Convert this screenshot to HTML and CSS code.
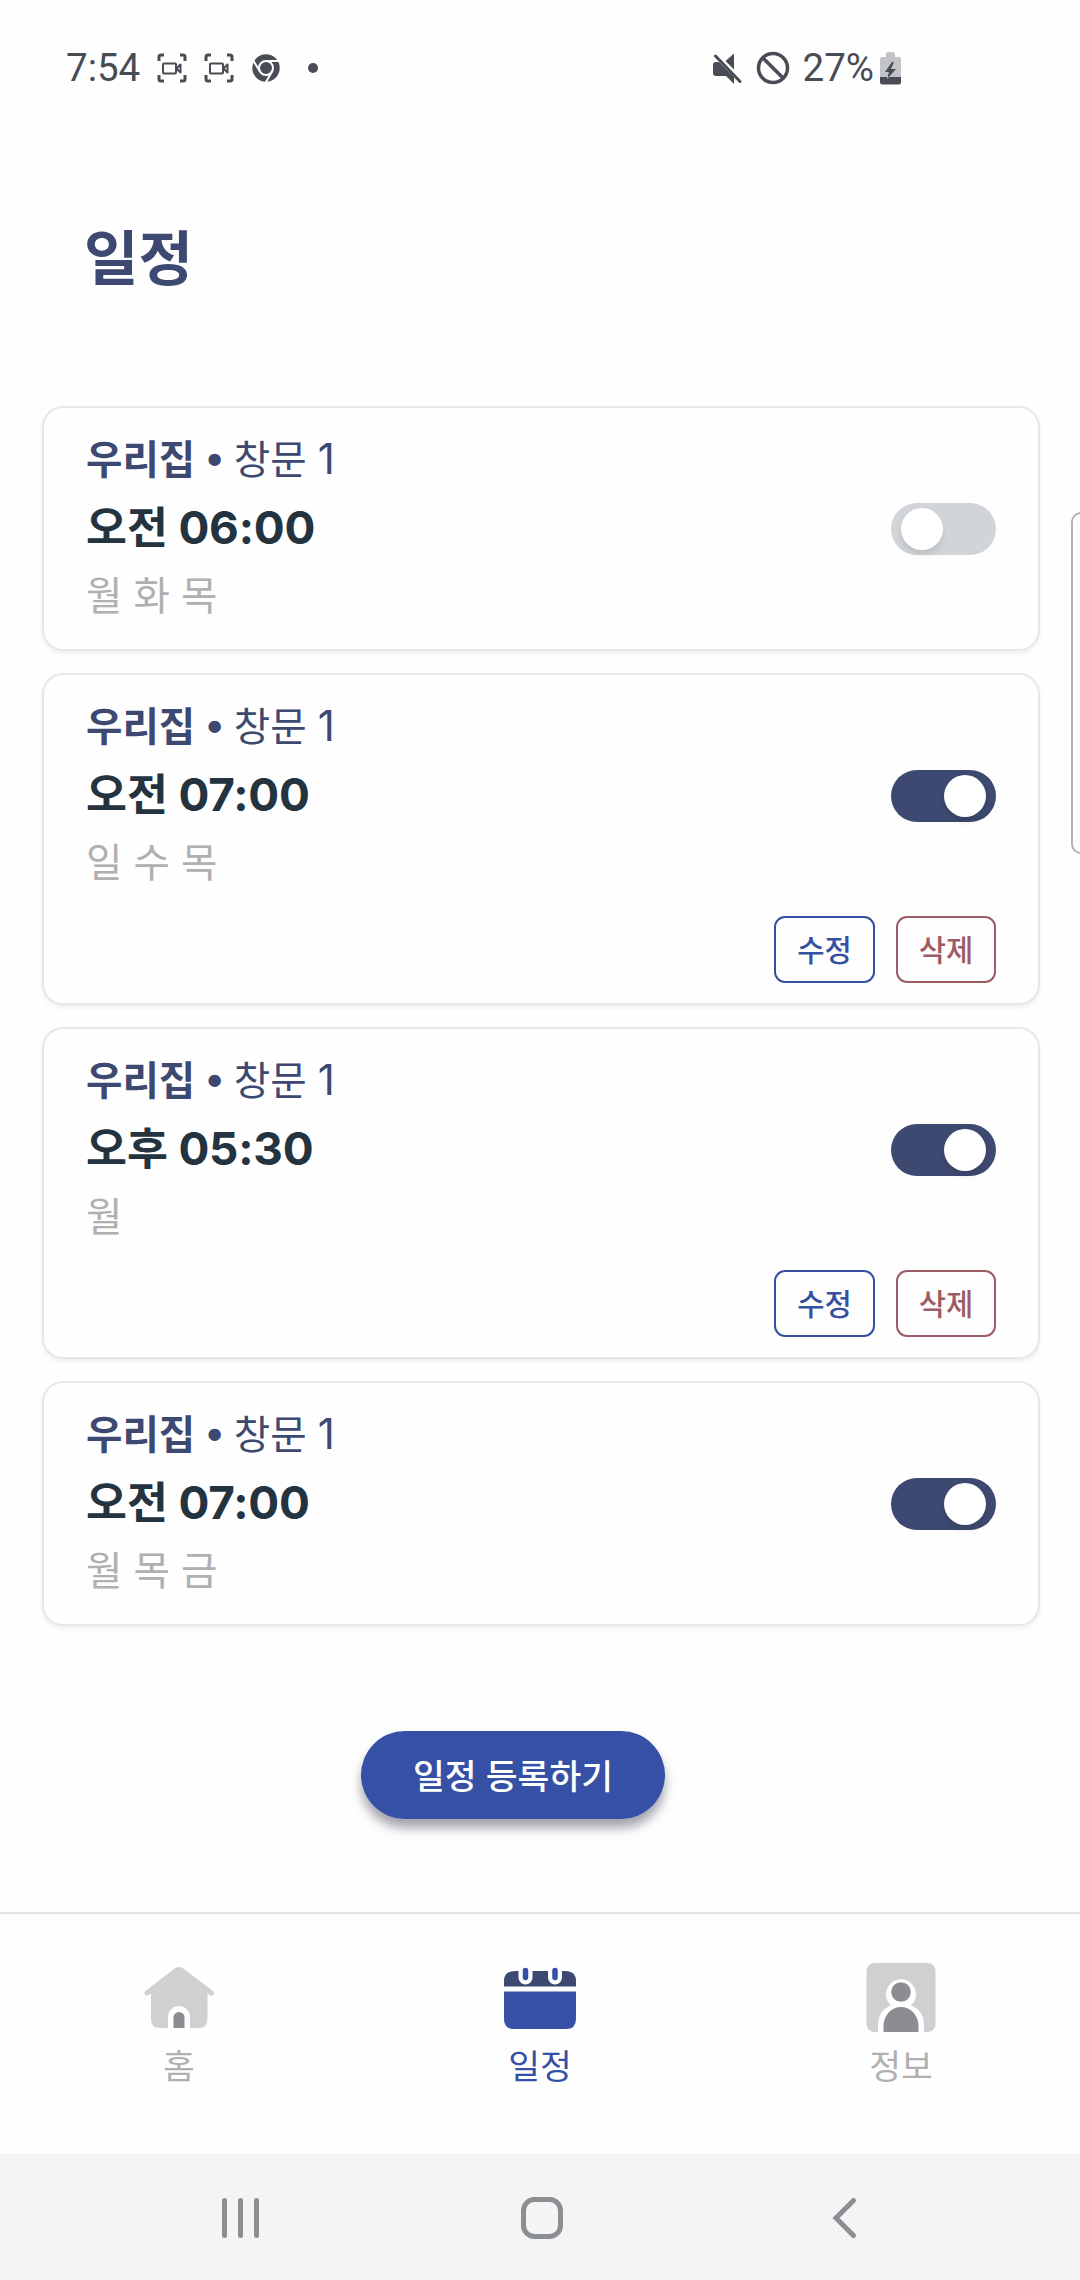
FILE: index.html
```html
<!DOCTYPE html>
<html lang="ko">
<head>
<meta charset="utf-8">
<title>일정</title>
<link rel="stylesheet" href="styles.css">
</head>
<body>
<div class="screen">
  <header class="status">
    <div class="status-left">
      <span class="clock">7:54</span>
      <svg class="cast" viewBox="0 0 30 30"><path class="line" d="M2 8V4q0-2 2-2h3M23 2h3q2 0 2 2v4M28 22v4q0 2-2 2h-3M7 28H4q-2 0-2-2v-4"/><path class="thin" d="M7 10.500h11q1 0 1 1v8q0 1-1 1H7q-1 0-1-1v-8q0-1 1-1zM19.500 15.500l4-4v8z"/></svg>
      <svg class="cast" viewBox="0 0 30 30"><path class="line" d="M2 8V4q0-2 2-2h3M23 2h3q2 0 2 2v4M28 22v4q0 2-2 2h-3M7 28H4q-2 0-2-2v-4"/><path class="thin" d="M7 10.500h11q1 0 1 1v8q0 1-1 1H7q-1 0-1-1v-8q0-1 1-1zM19.500 15.500l4-4v8z"/></svg>
      <svg class="chrome" viewBox="0 0 28 28"><circle class="fill" cx="14" cy="14" r="13.700"/><circle class="ring" cx="14" cy="14" r="7"/><path class="ring" d="M14 7h13M8 17.500L1.500 7M20 17.500L14 28"/></svg>
      <span class="dot"></span>
    </div>
    <div class="status-right">
      <svg class="mute" viewBox="0 0 30 32"><path class="fill" d="M1 13q0-3 3-3h3l15 15v7l-8-8H4q-3 0-3-3zM13.500 9L22 1.500V17.500z"/><path class="slash" d="M3.500 4l24.500 25.500"/></svg>
      <svg class="ban" viewBox="0 0 34 34"><circle cx="17" cy="17" r="14.500"/><path d="M7 7l20 20"/></svg>
      <span class="percent">27%</span>
      <svg class="battery" viewBox="0 0 22 33"><path class="shell" d="M6 5V2q0-2 2-2h5q2 0 2 2v3h4q2 0 2 2v18H0V7q0-2 2-2z"/><path class="fill" d="M0 25h21v5q0 2.500-2.500 2.500h-16Q0 32.500 0 30zM12 10l-7 10h4l-2 7 9-10h-5l3-7z"/></svg>
    </div>
  </header>

  <h1 class="title">일정</h1>

  <main class="cards">
    <article class="card">
      <div class="row">
        <div class="info">
          <p class="place"><b>우리집</b> <i>•</i> 창문 <span class="num">1</span></p>
          <p class="time">오전 <span class="num">06:00</span></p>
          <p class="days">월 화 목</p>
        </div>
        <div class="toggle"><span class="knob"></span></div>
      </div>
    </article>
    <article class="card">
      <div class="row">
        <div class="info">
          <p class="place"><b>우리집</b> <i>•</i> 창문 <span class="num">1</span></p>
          <p class="time">오전 <span class="num">07:00</span></p>
          <p class="days">일 수 목</p>
        </div>
        <div class="toggle on"><span class="knob"></span></div>
      </div>
      <div class="actions"><button class="edit">수정</button><button class="delete">삭제</button></div>
    </article>
    <article class="card">
      <div class="row">
        <div class="info">
          <p class="place"><b>우리집</b> <i>•</i> 창문 <span class="num">1</span></p>
          <p class="time">오후 <span class="num">05:30</span></p>
          <p class="days">월</p>
        </div>
        <div class="toggle on"><span class="knob"></span></div>
      </div>
      <div class="actions"><button class="edit">수정</button><button class="delete">삭제</button></div>
    </article>
    <article class="card">
      <div class="row">
        <div class="info">
          <p class="place"><b>우리집</b> <i>•</i> 창문 <span class="num">1</span></p>
          <p class="time">오전 <span class="num">07:00</span></p>
          <p class="days">월 목 금</p>
        </div>
        <div class="toggle on"><span class="knob"></span></div>
      </div>
    </article>
  </main>

  <div class="register-row"><button class="register">일정 등록하기</button></div>

  <nav class="tabs">
    <div class="tab">
      <svg viewBox="0 0 76 76"><path class="light" d="M33 9q5-4 10 0l29 22q2 2 .500 3.500-1.500 2-3.500.500l-2.500-1.500V59q0 9-9 9H49V57a11 11 0 0 0-22 0v11h-8q-9 0-9-9V33.500L7.500 35Q5 36 4 34.500 2.500 33 4.500 31z"/><path class="mid" d="M32.500 68V57.500a5.500 5.500 0 0 1 11 0V68z"/></svg>
      <span>홈</span>
    </div>
    <div class="tab active">
      <svg viewBox="0 0 76 76"><path class="navy" d="M2 26.500V21Q2 11 13 11h50q11 0 11 10v5.500z"/><path class="blue" d="M2 31.500h72V59q0 10-10 10H12Q2 69 2 59z"/><path class="gap" d="M23.500 5v12.500M53 5v12.500"/><path class="pin" d="M23.500 10.500v7M53 10.500v7"/></svg>
      <span>일정</span>
    </div>
    <div class="tab">
      <svg viewBox="0 0 76 76"><rect class="light" x="3.500" y="3" width="69" height="69" rx="8"/><path class="white" d="M15 72V66q0-16 13-20.500a15 15 0 1 1 20 0Q61 50 61 66v6z"/><circle class="mid" cx="38" cy="32" r="9.800"/><path class="mid" d="M20.500 72v-6a17.500 19 0 0 1 35 0v6z"/></svg>
      <span>정보</span>
    </div>
  </nav>

  <footer class="sysnav">
    <svg viewBox="0 0 50 50"><path d="M9.500 7.500v35M25.500 7.500v35M41.500 7.500v35"/></svg>
    <svg viewBox="0 0 50 50"><rect x="6.500" y="6.500" width="37" height="37" rx="11"/></svg>
    <svg viewBox="0 0 50 50"><path d="M33.500 7.500L16 25l17.500 17.500"/></svg>
  </footer>
  <span class="edge-handle"></span>
</div>
</body>
</html>
```
FILE: styles.css
```css
* { box-sizing: border-box; margin: 0; padding: 0; }
body {
  width: 1080px;
  height: 2280px;
  background: #fefefe;
  font-family: Inter, "Noto Sans CJK KR", sans-serif;
}
button { font: inherit; background: none; border: 0; }
svg { display: block; flex: none; }
.screen { position: relative; width: 1080px; height: 2280px; overflow: hidden; display: flex; flex-direction: column; }

.status {
  height: 136px;
  padding: 0 178px 0 66px;
  display: flex;
  justify-content: space-between;
  align-items: center;
  color: #4a4c55;
  font: 38.5px/44px Roboto, sans-serif;
}
.status-left, .status-right { display: flex; align-items: center; }
.clock { width: 91px; }
.cast { width: 30px; height: 30px; margin-right: 17px; }
.line, .thin { fill: none; stroke: #4a4c55; stroke-width: 3; }
.thin { stroke-width: 2; stroke-linejoin: round; }
.fill { fill: #4a4c55; }
.chrome { width: 28px; height: 28px; margin-left: 1px; }
.ring { fill: none; stroke: #fefefe; stroke-width: 2; }
.dot { width: 10px; height: 10px; border-radius: 50%; background: #4a4c55; margin-left: 27.5px; }
.mute { width: 30px; height: 32px; }
.slash { stroke: #4a4c55; stroke-width: 3; stroke-linecap: round; }
.ban { width: 34px; height: 34px; margin: 0 13px 0 14px; fill: none; stroke: #4a4c55; stroke-width: 3.5; }
.battery { width: 22px; height: 33px; margin-left: 6px; }
.shell { fill: #c3c4ca; }

.title { height: 270px; padding: 77px 0 0 84px; font-size: 59.3px; line-height: 92px; font-weight: 700; color: #3d4970; }

.cards { padding: 0 40px 0 42px; display: flex; flex-direction: column; gap: 22px; }
.card {
  border: 2px solid #e7e7e8;
  border-radius: 21px;
  background: #fefefe;
  box-shadow: 0 3px 4px rgba(0, 0, 0, .06);
  padding: 20px 42px;
}
.row { display: flex; justify-content: space-between; }
.info { height: 201px; }
.place { font-size: 39.6px; line-height: 64px; color: #3d4970; white-space: nowrap; }
.place b { font-weight: 700; }
.place i { font-style: normal; margin: 0 -3px; vertical-align: 3px; line-height: 1; }
.time { font-size: 44.5px; line-height: 72px; font-weight: 700; color: #243340; }
.days { font-size: 39.6px; line-height: 64px; color: #b0b0b2; }
.num { font-size: 1.06em; line-height: 1; }
.time .num { font-size: 1.03em; letter-spacing: -.2px; }
.toggle { width: 105px; height: 52px; margin-top: 75px; border-radius: 26px; background: #d1d4d9; padding: 5px 10px; display: flex; }
.toggle.on { background: #3d4970; justify-content: flex-end; }
.knob { width: 42px; height: 42px; border-radius: 50%; background: #fff; box-shadow: 0 5px 6px rgba(0, 0, 0, .09); }
.actions { display: flex; justify-content: flex-end; gap: 21px; margin-top: 20px; }
.actions button { width: 100px; height: 67px; border: 2px solid; border-radius: 11px; font-size: 29.7px; font-weight: 500; line-height: 60px; }
.actions .edit { width: 101px; color: #3550a1; }
.delete { color: #9c5c63; }

.register-row { padding: 104.5px 0 93.5px 361px; }
.register {
  display: block;
  width: 304px;
  height: 88px;
  padding-bottom: 2px;
  border-radius: 44px;
  background: #3550a4;
  color: #fff;
  font-size: 34.6px;
  font-weight: 500;
  box-shadow: 0 9px 11px rgba(0, 0, 30, .36);
}

.tabs { height: 242px; border-top: 2px solid #e3e3e4; display: flex; justify-content: space-between; padding: 46px 141px 0; }
.tab { width: 76px; display: flex; flex-direction: column; align-items: center; gap: 3px; color: #b0b0b2; font-size: 34.6px; line-height: 54px; white-space: nowrap; }
.tab svg { width: 76px; height: 76px; }
.tab.active { color: #3550a4; }
.light { fill: #cfd0d2; }
.mid { fill: #8b8d92; }
.navy { fill: #3d4970; }
.blue { fill: #3550a4; }
.white { fill: #fefefe; }
.gap { stroke: #fefefe; stroke-width: 14; stroke-linecap: round; }
.pin { stroke: #3550a4; stroke-width: 5.5; stroke-linecap: round; }

.sysnav { flex: 1; background: #f4f4f4; display: flex; justify-content: space-between; padding: 39px 210px 0 214.5px; }
.sysnav svg { width: 50px; height: 50px; fill: none; stroke: #8b8e93; stroke-width: 5; stroke-linecap: round; }

.edge-handle { position: absolute; left: 1071px; top: 512px; width: 20px; height: 342px; border: 2px solid #b3b3b8; border-radius: 12px; }
```
